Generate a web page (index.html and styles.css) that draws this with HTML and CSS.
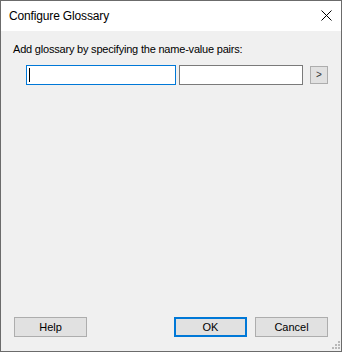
FILE: index.html
```html
<!DOCTYPE html>
<html lang="en">
<head>
    <meta charset="UTF-8">
    <meta name="viewport" content="width=device-width, initial-scale=1.0">
    <title>Configure Glossary</title>
    <link rel="stylesheet" href="styles.css">
</head>
<body>
    <div class="window">
        <div class="titlebar">
            <span class="title">Configure Glossary</span>
            <svg class="close-icon" width="11" height="11" viewBox="0 0 11 11">
                <path d="M0.5 0.5 L10.5 10.5 M10.5 0.5 L0.5 10.5" stroke="#000" stroke-width="1" fill="none"/>
            </svg>
        </div>

        <div class="content">
            <div class="prompt">Add glossary by specifying the name-value pairs:</div>

            <div class="pair-row">
                <div class="field field-focused">
                    <input type="text" class="text-input" id="glossaryName">
                    <span class="caret"></span>
                </div>
                <div class="field">
                    <input type="text" class="text-input" id="glossaryValue">
                </div>
                <button type="button" class="add-button">&gt;</button>
            </div>

            <div class="footer">
                <button type="button" class="dialog-button">Help</button>
                <button type="button" class="dialog-button default-button">OK</button>
                <button type="button" class="dialog-button">Cancel</button>
            </div>
        </div>

        <svg class="grip" width="8" height="8" viewBox="0 0 8 8">
            <rect x="6" y="0" width="2" height="2" fill="#b8b8b8"/>
            <rect x="3" y="3" width="2" height="2" fill="#b8b8b8"/>
            <rect x="6" y="3" width="2" height="2" fill="#b8b8b8"/>
            <rect x="0" y="6" width="2" height="2" fill="#b8b8b8"/>
            <rect x="3" y="6" width="2" height="2" fill="#b8b8b8"/>
            <rect x="6" y="6" width="2" height="2" fill="#b8b8b8"/>
        </svg>
    </div>
</body>
</html>
```

FILE: styles.css
```css
body {
    margin: 0;
    font-family: 'Liberation Sans', Arial, sans-serif;
    color: #000;
}

.window {
    position: relative;
    width: 342px;
    height: 352px;
    box-sizing: border-box;
    border: 1px solid #6b6b6b;
    display: flex;
    flex-direction: column;
    background-color: #f0f0f0;
}

.titlebar {
    height: 30px;
    background-color: #fff;
    display: flex;
    align-items: center;
    justify-content: space-between;
    padding-left: 8px;
}

.title {
    font-size: 12px;
    line-height: 15px;
    letter-spacing: -0.15px;
}

.close-icon {
    margin-right: 9px;
    margin-bottom: 1px;
}

.content {
    flex: 1;
    display: flex;
    flex-direction: column;
    padding: 12px 13px 14px 12px;
}

.prompt {
    font-size: 11px;
    line-height: 13px;
    letter-spacing: -0.2px;
}

.pair-row {
    display: flex;
    align-items: center;
    margin-top: 9px;
    padding-left: 13px;
}

.field {
    position: relative;
    height: 20px;
    box-sizing: border-box;
    border: 1px solid #7a7a7a;
    background-color: #fff;
    width: 124px;
}

.field-focused {
    border-color: #0078d7;
    width: 150px;
    margin-right: 3px;
}

.text-input {
    width: 100%;
    height: 100%;
    box-sizing: border-box;
    border: none;
    outline: none;
    padding: 0 2px;
    background: transparent;
    caret-color: transparent;
}

.caret {
    position: absolute;
    left: 2px;
    top: 2px;
    width: 1px;
    height: 14px;
    background-color: #000;
}

.add-button {
    width: 18px;
    height: 18px;
    margin-left: 7px;
    padding: 0;
    box-sizing: border-box;
    border: 1px solid #adadad;
    background-color: #e1e1e1;
    font-family: inherit;
    font-size: 10px;
    line-height: 14px;
    color: #333;
}

.footer {
    margin-top: auto;
    display: flex;
    gap: 8px;
    padding-left: 1px;
}

.dialog-button {
    width: 73px;
    height: 20px;
    box-sizing: border-box;
    border: 1px solid #adadad;
    background-color: #e1e1e1;
    font-family: inherit;
    font-size: 11px;
    padding: 0;
    color: #000;
}

.default-button {
    border: 2px solid #0078d7;
    margin-left: auto;
}

.grip {
    position: absolute;
    right: 1px;
    bottom: 2px;
}
```
